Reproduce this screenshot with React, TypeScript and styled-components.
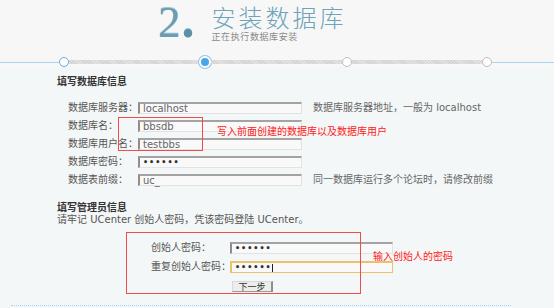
import React from "react";
import styled, { createGlobalStyle } from "styled-components";

const GlobalStyle = createGlobalStyle`
  html, body {
    margin: 0;
    padding: 0;
    background: #f7f7f7;
  }
  body {
    font-family: "DejaVu Sans", "Noto Sans CJK SC", sans-serif;
    font-size: 10px;
    color: #555;
  }
`;

const dbRows = [
  { label: "数据库服务器：", value: "localhost", hint: "数据库服务器地址，一般为 localhost" },
  { label: "数据库名：", value: "bbsdb" },
  { label: "数据库用户名：", value: "testbbs" },
  { label: "数据库密码：", value: "••••••", secret: true },
  { label: "数据表前缀：", value: "uc_", hint: "同一数据库运行多个论坛时，请修改前缀" },
];

export default function App() {
  return (
    <Page>
      <GlobalStyle />
      <Header>
        <StepNumber>
          2<Dot>.</Dot>
        </StepNumber>
        <TitleBox>
          <Title>安装数据库</Title>
          <SubTitle>正在执行数据库安装</SubTitle>
        </TitleBox>
      </Header>

      <Steps>
        <Line $width={59} />
        <StepDot />
        <Track />
        <StepDot $current />
        <Track />
        <StepDot $todo />
        <Track />
        <StepDot $todo />
        <Line $width={62} />
      </Steps>

      <Body>
        <SectionTitle>填写数据库信息</SectionTitle>
        <DbForm>
          {dbRows.map((row) => (
            <React.Fragment key={row.label}>
              <Label>{row.label}</Label>
              <Field $secret={row.secret}>{row.value}</Field>
              <Hint>{row.hint ?? ""}</Hint>
            </React.Fragment>
          ))}
        </DbForm>

        <SectionTitle $top={14}>填写管理员信息</SectionTitle>
        <Note>请牢记 UCenter 创始人密码，凭该密码登陆 UCenter。</Note>

        <AdminForm>
          <AdminLabel>创始人密码：</AdminLabel>
          <Field $secret $wide>••••••</Field>
          <AdminLabel>重复创始人密码：</AdminLabel>
          <Field $secret $wide $focus>
            ••••••<Caret />
          </Field>
          <span />
          <NextButton>下一步</NextButton>
        </AdminForm>
      </Body>

      <BottomRule />

      <MarkBox $x={118} $y={117} $w={85} $h={34} />
      <MarkText $x={217} $y={124}>写入前面创建的数据库以及数据库用户</MarkText>
      <MarkBox $x={126} $y={232} $w={235} $h={62} />
      <MarkText $x={373} $y={249}>输入创始人的密码</MarkText>
    </Page>
  );
}

const Page = styled.div`
  position: relative;
  width: 554px;
  height: 308px;
  overflow: hidden;
  background: #f7f7f7;
`;

const Header = styled.div`
  display: flex;
  align-items: flex-start;
  height: 56px;
  padding-left: 158px;
`;

const StepNumber = styled.div`
  font-family: "Liberation Serif", serif;
  font-size: 45px;
  line-height: 52px;
  margin-top: -6px;
  color: #6a9db2;
  letter-spacing: 1px;
  text-shadow: 0 -1px 0 #9cc3d3;
`;

const Dot = styled.span`
  font-size: 52px;
  font-weight: bold;
  color: #5d90a6;
`;

const TitleBox = styled.div`
  display: flex;
  flex-direction: column;
  margin-left: 16px;
  padding-top: 4px;
`;

const Title = styled.div`
  font-family: "Noto Sans CJK SC", sans-serif;
  font-weight: 300;
  font-size: 24px;
  line-height: 26px;
  letter-spacing: 3px;
  color: #6ea3b9;
`;

const SubTitle = styled.div`
  font-family: "Noto Sans CJK SC", sans-serif;
  font-size: 9px;
  line-height: 11px;
  letter-spacing: 0.6px;
  color: #8a8a8a;
  margin-top: 1px;
`;

const Steps = styled.div`
  display: flex;
  align-items: center;
  height: 12px;
`;

const Line = styled.div<{ $width: number }>`
  width: ${(p) => p.$width}px;
  height: 1px;
  background: #a9d3ef;
`;

const Track = styled.div`
  flex: 1;
  height: 4px;
  background: repeating-linear-gradient(45deg, #d2d2d2 0 1px, #e4e4e4 1px 2px);
`;

const StepDot = styled.div<{ $current?: boolean; $todo?: boolean }>`
  box-sizing: border-box;
  width: ${(p) => (p.$current ? 12 : 10)}px;
  height: ${(p) => (p.$current ? 12 : 10)}px;
  border-radius: 50%;
  background: ${(p) => (p.$current ? "#4aa6e6" : "#fff")};
  border: ${(p) =>
    p.$current ? "2px solid #fff" : p.$todo ? "1px solid #bdbdbd" : "1.5px solid #62b0e6"};
  box-shadow: ${(p) => (p.$current ? "0 0 0 1px #8cc6ec" : "none")};
`;

const Body = styled.div`
  background: #f4f7f7;
  padding: 6px 0 0 57px;
  height: 240px;
`;

const SectionTitle = styled.div<{ $top?: number }>`
  font-family: "Noto Sans CJK SC", sans-serif;
  font-weight: bold;
  font-size: 10px;
  line-height: 13px;
  color: #333;
  margin-top: ${(p) => p.$top ?? 0}px;
`;

const DbForm = styled.div`
  display: grid;
  grid-template-columns: 70px 164px auto;
  row-gap: 6px;
  align-items: center;
  margin: 15px 0 0 11px;
`;

const Label = styled.div`
  font-size: 10px;
  line-height: 12px;
  color: #555;
  white-space: nowrap;
`;

const Hint = styled.div`
  margin-left: 11px;
  font-size: 10px;
  line-height: 12px;
  color: #666;
  white-space: nowrap;
`;

const Field = styled.div<{ $secret?: boolean; $wide?: boolean; $focus?: boolean }>`
  box-sizing: border-box;
  width: ${(p) => (p.$wide ? 163 : 164)}px;
  height: 12px;
  display: flex;
  align-items: center;
  padding-left: 3px;
  background: #f9f9f9;
  border-top: 2px solid ${(p) => (p.$focus ? "#e8c26d" : "#a3a3a3")};
  border-left: 2px solid ${(p) => (p.$focus ? "#e8c26d" : "#8e8e8e")};
  border-right: 1px solid ${(p) => (p.$focus ? "#e8c26d" : "#e2e2e2")};
  border-bottom: 1px solid ${(p) => (p.$focus ? "#e8c26d" : "#e2e2e2")};
  font-size: ${(p) => (p.$secret ? 8 : 10)}px;
  letter-spacing: ${(p) => (p.$secret ? 1 : 0)}px;
  color: ${(p) => (p.$secret ? "#333" : "#666")};
  font-weight: ${(p) => (p.$secret ? "bold" : "normal")};
  line-height: 10px;
`;

const Caret = styled.span`
  display: inline-block;
  width: 1px;
  height: 8px;
  background: #222;
`;

const Note = styled.div`
  font-size: 10px;
  line-height: 13px;
  color: #555;
`;

const AdminForm = styled.div`
  display: grid;
  grid-template-columns: 79px 163px;
  row-gap: 7px;
  align-items: center;
  margin: 16px 0 0 94px;
`;

const AdminLabel = styled.div`
  font-size: 10px;
  line-height: 12px;
  color: #555;
  white-space: nowrap;
`;

const NextButton = styled.button`
  box-sizing: border-box;
  width: 41px;
  height: 11px;
  padding: 0;
  margin: 1px 0 0 2px;
  font-family: "Noto Sans CJK SC", sans-serif;
  font-size: 9px;
  line-height: 9px;
  color: #333;
  background: #ededed;
  border: 1px solid #d8d8d8;
  border-right: 2px solid #8d8d8d;
  border-bottom: 1px solid #9a9a9a;
  border-radius: 0;
`;

const BottomRule = styled.div`
  position: absolute;
  left: 11px;
  right: 43px;
  bottom: 2px;
  border-top: 1px dotted #a9d3ef;
`;

const MarkBox = styled.div<{ $x: number; $y: number; $w: number; $h: number }>`
  position: absolute;
  left: ${(p) => p.$x}px;
  top: ${(p) => p.$y}px;
  width: ${(p) => p.$w}px;
  height: ${(p) => p.$h}px;
  box-sizing: border-box;
  border: 1.5px solid #f24b4b;
`;

const MarkText = styled.div<{ $x: number; $y: number }>`
  position: absolute;
  left: ${(p) => p.$x}px;
  top: ${(p) => p.$y}px;
  font-family: "Noto Sans CJK SC", sans-serif;
  font-size: 10px;
  line-height: 14px;
  color: #ff2020;
  white-space: nowrap;
`;
